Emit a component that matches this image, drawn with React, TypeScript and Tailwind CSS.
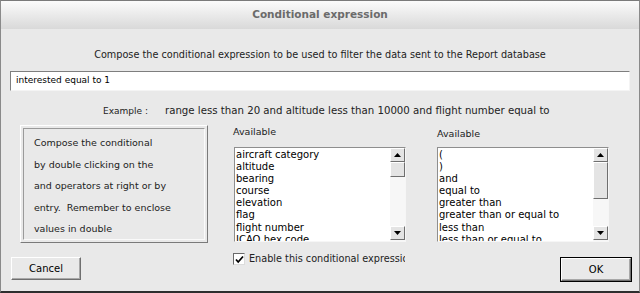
import React from "react";

const fields = [
  "aircraft category",
  "altitude",
  "bearing",
  "course",
  "elevation",
  "flag",
  "flight number",
  "ICAO hex code",
];

const operators = [
  "(",
  ")",
  "and",
  "equal to",
  "greater than",
  "greater than or equal to",
  "less than",
  "less than or equal to",
];

const helpLines = [
  "Compose the conditional",
  "by double clicking on the",
  "and operators at right or by",
  "entry.  Remember to enclose",
  "values in double",
];

const ScrollButton = ({ down }: { down?: boolean }) => (
  <div className="flex h-[14px] w-[15px] items-center justify-center border border-t-white border-l-white border-r-[#6f6f6f] border-b-[#6f6f6f] bg-[#e4e4e4]">
    <svg width="7" height="4" viewBox="0 0 7 4">
      <path d={down ? "M0 0h7L3.5 4z" : "M0 4h7L3.5 0z"} fill="#000" />
    </svg>
  </div>
);

const ListBox = ({ items, thumb }: { items: string[]; thumb: string }) => (
  <div className="flex h-[95px] w-[172px] border border-t-[#8e8e8e] border-l-[#8e8e8e] border-r-[#f6f6f6] border-b-[#f6f6f6] bg-white">
    <ul className="flex-1 overflow-hidden pl-[1px] pt-[1px] text-[10px] leading-[12.1px] text-black">
      {items.map((item) => (
        <li key={item} className="whitespace-nowrap">
          {item}
        </li>
      ))}
    </ul>
    <div className="flex w-[15px] flex-col bg-[#f7f7f7]">
      <ScrollButton />
      <div className={`${thumb} w-[15px] border border-t-white border-l-white border-r-[#6f6f6f] border-b-[#6f6f6f] bg-[#e4e4e4]`} />
      <div className="flex-1" />
      <ScrollButton down />
      <div className="h-[1px]" />
    </div>
  </div>
);

const Button = ({ label, isDefault }: { label: string; isDefault?: boolean }) => (
  <div className={isDefault ? "border border-black" : ""}>
    <div className="flex h-[23px] w-[70px] items-center justify-center border border-t-white border-l-white border-r-[#6f6f6f] border-b-[#6f6f6f] bg-[#e9e9e9] text-[10px] text-black shadow-[inset_-1px_-1px_0_#a8a8a8]">
      {label}
    </div>
  </div>
);

export default function App() {
  return (
    <div className="flex h-[293px] w-[640px] flex-col overflow-hidden border-x border-t border-b-2 border-x-[#8a8a8a] border-t-[#7a7a7a] border-b-[#2e2e2e] bg-[#e9e9e9] font-['DejaVu_Sans',sans-serif] text-[#222]">
      {/* Title bar */}
      <div className="flex h-[28px] items-center justify-center bg-gradient-to-b from-[#fbfbfb] to-[#d9d9d9] text-[10.5px] font-bold text-[#6b6b6b]">
        Conditional expression
      </div>

      <div className="pt-[20px] text-center text-[9.7px] leading-[12px] text-[#222]">
        Compose the conditional expression to be used to filter the data sent to the Report database
      </div>

      <div className="mx-[9px] mt-[10px] flex h-[20px] items-center border border-t-[#7e7e7e] border-l-[#7e7e7e] border-r-[#f4f4f4] border-b-[#f4f4f4] bg-white pl-[5px] text-[9px] text-black">
        interested equal to 1
      </div>

      <div className="mt-[14px] flex items-center leading-[12px] text-[#222]">
        <span className="ml-[102px] text-[9px]">Example :</span>
        <span className="ml-[17px] text-[10.2px]">range less than 20 and altitude less than 10000 and flight number equal to</span>
      </div>

      {/* Main row */}
      <div className="mt-[8px] flex items-start">
        <div className="ml-[19px] h-[118px] w-[188px] border border-t-white border-l-white border-r-[#7a7a7a] border-b-[#7a7a7a] p-[2px]">
          <div className="h-full border border-t-[#9a9a9a] border-l-[#9a9a9a] border-r-[#fafafa] border-b-[#fafafa] pl-[10px] pt-[3px] text-[9.5px] leading-[21.5px] text-[#222]">
            {helpLines.map((line) => (
              <div key={line} className="whitespace-pre">
                {line}
              </div>
            ))}
          </div>
        </div>

        <div className="ml-[25px] flex flex-col">
          <div className="h-[22px] pt-[1px] text-[9.5px] leading-[12px] text-[#222]">Available</div>
          <div className="ml-[1px]">
            <ListBox items={fields} thumb="h-[15px]" />
          </div>
        </div>

        <div className="ml-[31px] flex flex-col">
          <div className="h-[22px] pt-[3px] text-[9.5px] leading-[12px] text-[#222]">Available</div>
          <ListBox items={operators} thumb="h-[37px]" />
        </div>
      </div>

      {/* Bottom row */}
      <div className="mt-[10px] flex items-start">
        <div className="ml-[10px] mt-[4px]">
          <Button label="Cancel" />
        </div>
        <div className="ml-[152px] flex w-[172px] items-center overflow-hidden">
          <div className="flex h-[12px] w-[12px] shrink-0 items-center justify-center border border-t-[#6a6a6a] border-l-[#6a6a6a] border-r-[#dcdcdc] border-b-[#dcdcdc] bg-white">
            <svg width="9" height="9" viewBox="0 0 9 9">
              <path d="M1 4.5l2.2 2.5L8 1.5" fill="none" stroke="#000" strokeWidth="1.8" />
            </svg>
          </div>
          <span className="ml-[4px] whitespace-nowrap text-[9.7px] leading-[12px] text-[#222]">
            Enable this conditional expression
          </span>
        </div>
        <div className="ml-auto mr-[7px] mt-[4px]">
          <Button label="OK" isDefault />
        </div>
      </div>
    </div>
  );
}
